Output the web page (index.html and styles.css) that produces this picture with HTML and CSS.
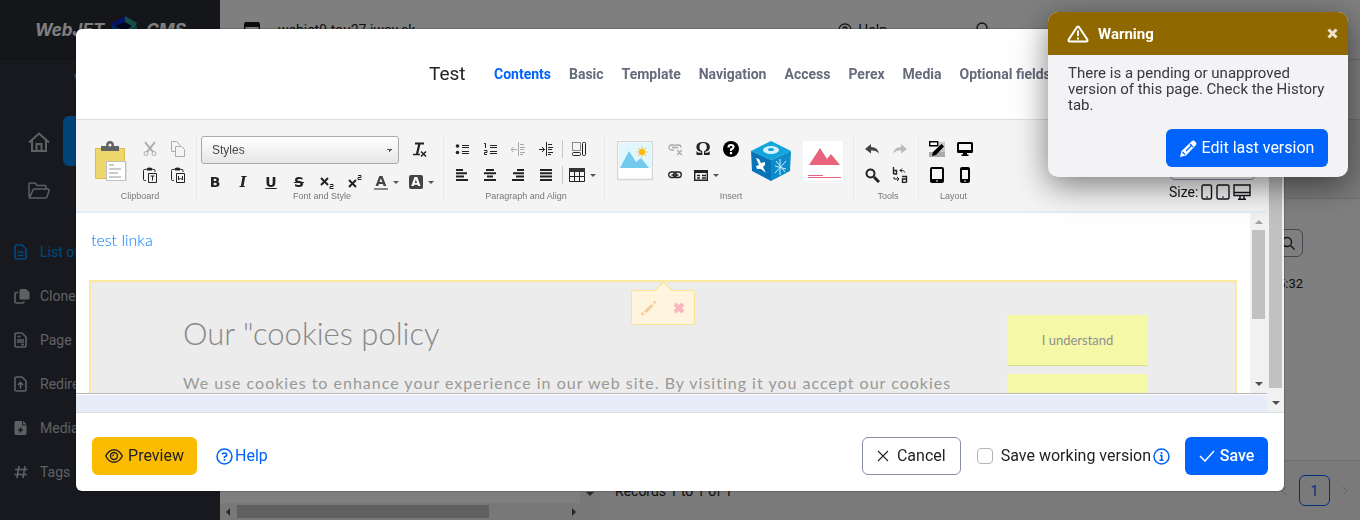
FILE: index.html
```html
<!DOCTYPE html>
<html lang="en">
<head>
<meta charset="utf-8">
<title>WebJET CMS</title>
<link rel="stylesheet" href="styles.css">
</head>
<body>
<div class="app">
  <aside class="sidebar">
    <div class="logo">
      <span>WebJET</span>
      <svg width="26" height="28" viewBox="0 0 26 28"><path d="M13 0 0 7v13l13 8z" fill="#0a28c8"/><path d="m13 0 12 7-4 8-8-4z" fill="#2ca08a"/><path d="m0 9 13 6v13L0 21z" fill="#0b5bb5"/><path d="m13 14 12-4v10l-12 8z" fill="#1c8c86"/><path d="m3 10 10-4 7 4-7 5z" fill="#02103c"/></svg>
      <span>CMS</span>
    </div>
    <div class="site-name">WebJET</div>
    <div class="rail">
      <div class="rail-icons">
        <svg width="22" height="20" viewBox="0 0 22 20" class="line"><path d="M1 10.500 11 1.500l10 9M4 8v11h14V8M8.500 19v-7h5v7" stroke-width="2"/></svg>
        <svg width="22" height="17" viewBox="0 0 22 17" class="line"><path d="M1 15V2q0-1 1-1h5l2 2.500h8q1 0 1 1V7M1.500 16 5 8q.5-1 1.500-1H20q1.500 0 1 1.500L19 15q-.4 1-1.500 1z" stroke-width="1.500"/></svg>
      </div>
      <div class="rail-active"></div>
    </div>
    <nav class="menu">
      <a href="#" class="active"><svg width="13" height="16" viewBox="0 0 13 16" class="line"><path d="M1 2.500Q1 1 2.500 1H8l4 4v8.500q0 1.500-1.500 1.500h-8Q1 15 1 13.500zM3.500 8h6M3.500 11.500h6" stroke-width="1.700"/></svg>List of web pages</a>
      <a href="#"><svg width="16" height="16" viewBox="0 0 16 16"><path d="M7 1h5l3.500 3v6q0 1.500-1.500 1.500H7Q5.500 11.500 5.500 10V2.500Q5.500 1 7 1z" fill="currentColor"/><path d="M4 4.500H2.500Q1 4.500 1 6v7.500Q1 15 2.500 15h6q1.500 0 1.500-1.500" fill="none" stroke="currentColor" stroke-width="1.600"/></svg>Clone structure</a>
      <a href="#"><svg width="13" height="16" viewBox="0 0 13 16" class="line"><path d="M1 2.500Q1 1 2.500 1H8l4 4v8.500q0 1.500-1.500 1.500h-8Q1 15 1 13.500zM3.500 4.500h3M3 8h7M3 10h7M7 12.500h3" stroke-width="1.600"/></svg>Page attributes</a>
      <a href="#"><svg width="13" height="16" viewBox="0 0 13 16" class="line"><path d="M1 2.500Q1 1 2.500 1H8l4 4v8.500q0 1.500-1.500 1.500h-8Q1 15 1 13.500zM6.500 12.500V7M4 9l2.500-2.500L9 9" stroke-width="1.600"/></svg>Redirects</a>
      <a href="#"><svg width="13" height="16" viewBox="0 0 13 16"><path d="M.5 2.500Q.5 1 2 1h6v4.500h4.500v8q0 1.500-1.500 1.500H2Q.5 15 .5 13.500zM9 .8 12.700 4.500H9z" fill="currentColor"/><path d="M6.500 7.500v5M4 10h5" stroke="#30333c" stroke-width="1.500"/></svg>Media</a>
      <a href="#"><svg width="14" height="14" viewBox="0 0 14 14" class="line"><path d="M5 1 3 13M11 1 9 13M1 4.500h12.500M.5 9.500H13" stroke-width="1.600"/></svg>Tags</a>
    </nav>
  </aside>
  <main class="content">
    <header class="topbar">
      <svg width="16" height="16" viewBox="0 0 16 16"><rect x=".75" y=".75" width="14.500" height="14.500" rx="1.500" fill="none" stroke="#15171f" stroke-width="1.500"/><path d="M1 1h14v4H1z" fill="#15171f"/></svg>
      <span class="domain">webjet9.tau27.iway.sk</span>
      <a href="#" class="top-help"><svg width="14" height="14" viewBox="0 0 16 16" class="line"><circle cx="8" cy="8" r="7" stroke-width="1.400"/><path d="M5.800 6.200Q6 4.500 8 4.500t2.200 1.700Q10 7.500 8 8.500v1M8 11v1.500" stroke-width="1.600"/></svg>Help</a>
      <svg width="15" height="15" viewBox="0 0 15 15" class="line top-search"><circle cx="7" cy="6" r="5" stroke-width="1.300"/><path d="m10 10 4 4" stroke-width="1.300"/></svg>
    </header>
    <div class="subbar"></div>
    <div class="filterbar"></div>
    <div class="panels">
      <section class="tree">
        <div class="vbar"><i class="arrow down"></i></div>
        <div class="hbar"><i class="arrow left"></i><b></b><i class="arrow right"></i></div>
      </section>
      <section class="list">
        <div class="list-body">
          <button class="search-btn" aria-label="Search"><svg width="14" height="14" viewBox="0 0 14 14" class="line"><circle cx="6" cy="6" r="4.500" stroke-width="1.300"/><path d="m9.500 9.500 4 4" stroke-width="1.300"/></svg></button>
          <span class="time">5:32</span>
        </div>
        <footer class="list-footer">
          <span>Records 1 to 1 of 1</span>
          <div class="pager"><svg width="6" height="10" viewBox="0 0 6 10" class="line"><path d="M5 1 1 5l4 4"/></svg><button>1</button><svg width="6" height="10" viewBox="0 0 6 10" class="line"><path d="m1 1 4 4-4 4"/></svg></div>
        </footer>
      </section>
    </div>
  </main>
</div>

<div class="backdrop">
  <div class="modal" role="dialog" aria-label="Test">
    <header class="modal-header">
      <h1>Test</h1>
      <nav class="tabs">
        <a href="#" class="active">Contents</a><a href="#">Basic</a><a href="#">Template</a><a href="#">Navigation</a><a href="#">Access</a><a href="#">Perex</a><a href="#">Media</a><a href="#">Optional fields</a>
      </nav>
    </header>
    <div class="modal-body">
      <div class="editor">
        <div class="toolbar">
          <div class="group clipboard">
            <div class="tools">
              <button class="big" aria-label="Paste"><svg width="34" height="42" viewBox="0 0 34 42"><path d="M27 22h6v19H13z" fill="#dcdcdc"/><path d="M1.500 8.500h29v30h-29z" fill="#eed76d" stroke="#d8bd4c"/><path d="M7 6h5q0-5 4-5t4 5h5v5H7z" fill="#636363"/><circle cx="16" cy="5" r="1.500" fill="#f4f4f4"/><path d="M12.500 21.500h19v19h-19z" fill="#fff" stroke="#c0c0c0"/><path d="M15 25h5M15 29h12M15 33h9M15 37h12" stroke="#bbb" stroke-width="1.500"/></svg></button>
              <div class="rows">
                <div class="row"><button aria-label="Cut" class="off"><svg width="14" height="16" viewBox="0 0 14 16" class="line"><path d="m2 1 8 10M12 1 4 11" stroke-width="2"/><circle cx="3" cy="12.500" r="2"/><circle cx="11" cy="12.500" r="2"/></svg></button><button aria-label="Copy" class="off"><svg width="14" height="16" viewBox="0 0 14 16" class="line"><path d="M4.500 10.500h-4V.500h5l4 4M4.500 5.500h6l3 3v7h-9z"/></svg></button></div>
                <div class="row"><button aria-label="Paste as plain text"><svg width="14" height="16" viewBox="0 0 14 16" class="line"><path d="M3 13.500H1.500q-1 0-1-1v-9q0-1 1-1H3M10 2.500h1q1 0 1 1V5M3.500 2h6" /><path d="M4 2q0-1 2.500-1T9 2v1H4z" fill="#222"/><path d="M5.500 6.500h8v9h-8zM7.500 9h4M9.500 9v4.500"/></svg></button><button aria-label="Paste from Word"><svg width="14" height="16" viewBox="0 0 14 16" class="line"><path d="M3 13.500H1.500q-1 0-1-1v-9q0-1 1-1H3M10 2.500h1q1 0 1 1V5M3.500 2h6"/><path d="M4 2q0-1 2.500-1T9 2v1H4z" fill="#222"/><path d="M5.500 6.500h8v9h-8zM7.500 9v4l2-2 2 2V9"/></svg></button></div>
              </div>
            </div>
            <span class="caption">Clipboard</span>
          </div>
          <div class="group font">
            <div class="tools stack">
              <div class="row"><select class="styles" aria-label="Styles"><option>Styles</option></select><button class="wide" aria-label="Remove format"><svg width="16" height="16" viewBox="0 0 16 16" class="line"><path d="M3 1.500h9M7.500 1.500 5 12" stroke-width="2.200"/><path d="M1 12.500h7M9 9.500l5 5M14 9.500l-5 5" stroke-width="1.500"/></svg></button></div>
              <div class="row text-row"><button><b>B</b></button><button><i class="serif">I</i></button><button><u>U</u></button><button><s>S</s></button><button aria-label="Subscript"><svg width="16" height="16" viewBox="0 0 16 16" class="line"><path d="m2 4 7 7M9 4l-7 7" stroke-width="2"/><path d="M11 10.500h3v2h-3v2h3.500"/></svg></button><button aria-label="Superscript"><svg width="16" height="16" viewBox="0 0 16 16" class="line"><path d="m2 6 7 7M9 6l-7 7" stroke-width="2"/><path d="M11 1.500h3v2h-3v2h3.500"/></svg></button><button class="drop"><b class="color">A</b><i class="caret"></i></button><button class="drop"><b class="fill">A</b><i class="caret"></i></button></div>
            </div>
            <span class="caption">Font and Style</span>
          </div>
          <div class="group para">
            <div class="tools">
              <div class="rows">
                <div class="row">
                  <button aria-label="Bullets"><svg width="14" height="14" viewBox="0 0 14 14" class="line"><circle cx="2.500" cy="4" r="1.800" fill="#222" stroke="none"/><circle cx="2.500" cy="10.500" r="1.800" fill="#222" stroke="none"/><path d="M7 3.500h7M7 5.500h7M7 9.500h7M7 11.500h7"/></svg></button>
                  <button aria-label="Numbering"><svg width="14" height="14" viewBox="0 0 14 14" class="line"><path d="M1 1.500h1.500V6M1 8.500h3v2H1.500v2H4M7 3.500h7M7 5.500h7M7 9.500h7M7 11.500h7"/></svg></button>
                  <button aria-label="Outdent" class="off"><svg width="14" height="14" viewBox="0 0 14 14" class="line"><path d="M0 7.500h6M2.500 5 0 7.500 2.500 10M7.500 0v14M9 2.500h4M9 5.500h5M9 7.500h4M9 10.500h5M9 12.500h3"/></svg></button>
                  <button aria-label="Indent"><svg width="14" height="14" viewBox="0 0 14 14" class="line"><path d="M0 7.500h6M3 5l2.500 2.500L3 10M7.500 0v14M9 2.500h4M9 5.500h5M9 7.500h4M9 10.500h5M9 12.500h3"/></svg></button>
                  <i class="sep"></i>
                  <button aria-label="Page layout"><svg width="14" height="14" viewBox="0 0 14 14" class="line"><path d="M.5.500h8v8h-8z" stroke-dasharray="1 1"/><rect x="10.500" y=".5" width="3" height="13" rx="1"/><rect x=".5" y="10.500" width="8" height="3" rx="1"/></svg></button>
                </div>
                <div class="row">
                  <button aria-label="Align left"><svg width="12" height="12" viewBox="0 0 12 12" class="line thick"><path d="M0 1h7M0 4.300h11M0 7.600h8M0 11h12"/></svg></button>
                  <button aria-label="Center"><svg width="12" height="12" viewBox="0 0 12 12" class="line thick"><path d="M2 1h8M0 4.300h12M3 7.600h6M0 11h12"/></svg></button>
                  <button aria-label="Align right"><svg width="12" height="12" viewBox="0 0 12 12" class="line thick"><path d="M5 1h7M1 4.300h11M4 7.600h8M0 11h12"/></svg></button>
                  <button aria-label="Justify"><svg width="12" height="12" viewBox="0 0 12 12" class="line thick"><path d="M0 1h12M0 4.300h12M0 7.600h12M0 11h12"/></svg></button>
                  <i class="sep"></i>
                  <button class="drop" aria-label="Table"><svg width="16" height="14" viewBox="0 0 16 14" class="line"><path d="M.5.500h15v13H.5zM.5 8.500h15M5.500 4v9.500M10.500 4v9.500"/><path d="M0 0h16v4H0z" fill="#333" stroke="none"/></svg><i class="caret"></i></button>
                </div>
              </div>
            </div>
            <span class="caption">Paragraph and Align</span>
          </div>
          <div class="group insert">
            <div class="tools">
              <button class="big" aria-label="Image"><svg width="36" height="40" viewBox="0 0 36 40"><path d="M.5.500h35v38H.5z" fill="#fff" stroke="#d5d5d5" stroke-width="1.500"/><path d="M2 2h32v25H2z" fill="#e0f7ff"/><path d="m3 27 9-17 7 11 5-4 8 10z" fill="#74caec"/><circle cx="25" cy="11" r="3.200" fill="#fdb913"/><path d="M25 5.500v2M25 14.500v2M19.500 11h2M28.500 11h2M21 7l1.500 1.500M27.500 13.500 29 15M29 7l-1.500 1.500M22.500 13.500 21 15" stroke="#fdb913"/></svg></button>
              <div class="rows">
                <div class="row"><button aria-label="Unlink" class="off"><svg width="15" height="13" viewBox="0 0 15 13" class="line"><path d="M6 7H3.500Q1 7 1 4.500T3.500 2H6M8 2h2.500Q13 2 13 4.500M4 4.500h6M5 2.500Q7 1.500 8 3M9 7l5 5M14 7l-5 5" stroke-width="1.300"/></svg></button><button aria-label="Special character"><span class="omega">Ω</span></button><button aria-label="About"><svg width="16" height="16" viewBox="0 0 16 16"><circle cx="8" cy="8" r="8"/><path d="M5.500 6.500q0-2.500 2.500-2.500t2.500 2Q10.500 7.500 8 8.500V10M8 11v2.200" fill="none" stroke="#fff" stroke-width="2.200"/></svg></button></div>
                <div class="row"><button aria-label="Link"><svg width="14" height="8" viewBox="0 0 14 8" class="line"><rect x=".7" y="1" width="7.600" height="5.500" rx="2.700" stroke-width="1.300"/><rect x="5.700" y="1" width="7.600" height="5.500" rx="2.700" stroke-width="1.300"/><path d="M3.500 4h7" stroke-width="1.300"/></svg></button><button class="drop" aria-label="Form"><svg width="14" height="11" viewBox="0 0 14 11" class="line"><path d="M.7.700h12.600v9.600H.7z" stroke-width="1.400"/><path d="M0 0h14v3H0z" fill="#222" stroke="none"/><path d="M3 5.500h3M8 5.500h4M3 8h3M8 8h4" stroke-width="1.400"/></svg><i class="caret"></i></button></div>
              </div>
              <button class="big" aria-label="Application"><svg width="40" height="40" viewBox="0 0 40 40"><path d="M20 0 0 10l20 9 20-9z" fill="#12a4dc"/><path d="m0 10 20 9v21L1 30z" fill="#0873b8"/><path d="m40 10-20 9v21l19-10z" fill="#0c8ccb"/><ellipse cx="20" cy="9" rx="8" ry="4" fill="#d8f2fc"/><ellipse cx="20" cy="8.500" rx="3" ry="1.500" fill="#12a4dc"/><path d="m5 17 3 1 2 4 4-1 0 3-2 2 3 6-5-4-4 0-1-3 3-1z" fill="#fff"/><path d="m24 32 11-12M24 25l11 3M29 18v16M25 20l9 11" stroke="#c8eefb"/></svg></button>
              <button class="big" aria-label="Block"><svg width="40" height="40" viewBox="0 0 40 40"><path d="M0 0h40v40H0z" fill="#fff"/><path d="M6 24 17 7l7 11 4-5 9 11z" fill="#e9637a"/><path d="M5 34.500h15M5 36.500h33" stroke="#e9637a"/></svg></button>
            </div>
            <span class="caption">Insert</span>
          </div>
          <div class="group small">
            <div class="tools"><div class="rows">
              <div class="row"><button aria-label="Undo"><svg width="14" height="12" viewBox="0 0 14 12"><path d="M6 1v3q7 0 8 7-2-4-8-3.500v3L0 6z" fill="#444"/></svg></button><button aria-label="Redo"><svg width="14" height="12" viewBox="0 0 14 12"><path d="M8 1v3Q1 4 0 11q2-4 8-3.500v3L14 6z" fill="#bbb"/></svg></button></div>
              <div class="row"><button aria-label="Find"><svg width="15" height="15" viewBox="0 0 15 15" class="line"><circle cx="5.500" cy="5.500" r="4" stroke-width="2"/><path d="m9 9 5 5" stroke-width="3"/></svg></button><button aria-label="Replace"><svg width="16" height="16" viewBox="0 0 16 16" class="line"><path d="M1.500 0v7M1.500 3.500h3v3.500h-3M10 9.500h4.500v6M14.500 12h-4v3.500h4" stroke-width="1.400"/><path d="M8 3.500q4-1 5 2M8 3.500l2-2M8 3.500l2 2M2 10v2h5M5 10l2 2-2 2"/></svg></button></div>
            </div></div>
            <span class="caption">Tools</span>
          </div>
          <div class="group small last">
            <div class="tools"><div class="rows">
              <div class="row"><button aria-label="Edit blocks"><svg width="16" height="16" viewBox="0 0 16 16"><path d="M10 1h6v15H0v-5h8z" fill="#c9c9c9"/><path d="M0 11h16v5H0z" fill="#aaa"/><path d="M.7.700h8v4h-8z" fill="#fff" stroke="#000" stroke-width="1.400"/><path d="m3 15 1-4 8.500-8L15 5.500 7 14z" fill="#000"/></svg></button><button aria-label="Desktop"><svg width="16" height="14" viewBox="0 0 16 14"><path d="M1.500 0h13Q16 0 16 1.500v8q0 1.500-1.500 1.500H10v1.500h1.500V14h-7v-1.500H6V11H1.500Q0 11 0 9.500v-8Q0 0 1.500 0z"/><path d="M2 2h12v6H2z" fill="#f4f4f4"/></svg></button></div>
              <div class="row"><button aria-label="Tablet"><svg width="14" height="16" viewBox="0 0 14 16"><rect width="14" height="16" rx="2"/><path d="M2 2h10v10H2z" fill="#f4f4f4"/><path d="M6 14h2" stroke="#fff"/></svg></button><button aria-label="Phone"><svg width="10" height="16" viewBox="0 0 10 16"><rect width="10" height="16" rx="2"/><path d="M2 3h6v9H2z" fill="#f4f4f4"/><path d="M4 14h2" stroke="#fff"/></svg></button></div>
            </div></div>
            <span class="caption">Layout</span>
          </div>
          <div class="view">
            <select aria-label="View"></select>
            <div class="size">Size:
              <svg width="12" height="16" viewBox="0 0 12 16" class="line"><rect x="1" y="1" width="9.500" height="14" rx="1.500" stroke-width="1.400"/><path d="M5 13h2"/></svg>
              <svg width="14" height="16" viewBox="0 0 14 16" class="line"><rect x="1" y="1" width="12" height="14" rx="1.500" stroke-width="1.400"/><path d="M6 13h2"/></svg>
              <svg width="18" height="16" viewBox="0 0 18 16" class="line"><path d="M1 1h16v10.500H1zM1 8.500h16M7 12v3M11 12v3M5 15.300h8" stroke-width="1.400"/></svg>
            </div>
          </div>
        </div>
        <div class="page-view">
          <div class="page">
            <p><a href="#">test linka</a></p>
            <section class="cookies">
              <div class="cookie-text">
                <h2>Our "cookies policy</h2>
                <p>We use cookies to enhance your experience in our web site. By visiting it you accept our cookies</p>
              </div>
              <div class="cookie-actions"><button>I understand</button><button aria-label="More"></button></div>
              <div class="bubble">
                <svg width="16" height="16" viewBox="0 0 16 16"><path d="M0 15.500 1 11.500l3 3zM3 11 10.500 4 12.500 6 5.500 13zM12 2.500 13.500.5 15.500 2.500 13.500 4z" fill="#f7cba0"/></svg>
                <svg width="12" height="12" viewBox="0 0 12 12"><path d="m2 2 8 8M10 2l-8 8" stroke="#fbb6bd" stroke-width="4"/></svg>
              </div>
            </section>
          </div>
          <div class="scroll"><i class="arrow up"></i><b></b><i class="arrow down"></i></div>
        </div>
        <div class="status"></div>
      </div>
      <div class="scroll outer"><b></b><i class="arrow down"></i></div>
    </div>
    <footer class="modal-footer">
      <button class="btn preview"><svg width="18" height="14" viewBox="0 0 18 14" class="line"><path d="M.7 7Q4 .7 9 .7T17.300 7Q14 13.300 9 13.300T.7 7z" stroke-width="1.400"/><circle cx="9" cy="7" r="3.500" stroke-width="1.400"/><path d="M9 5Q9 7 7 7" /></svg>Preview</button>
      <a href="#" class="help"><svg width="17" height="17" viewBox="0 0 17 17" class="line"><circle cx="8.500" cy="8.500" r="7.500" stroke-width="1.500"/><path d="M6.200 6.500Q6.500 5 8.500 5t2.200 1.700Q10.700 8 8.500 9v1M8.500 11v1.700" stroke-width="1.700"/></svg>Help</a>
      <button class="btn cancel"><svg width="12" height="12" viewBox="0 0 12 12" class="line"><path d="m1 1 10 10M11 1 1 11" stroke-width="1.100"/></svg>Cancel</button>
      <label class="working"><input type="checkbox">Save working version</label>
      <svg width="17" height="17" viewBox="0 0 17 17" class="line info"><circle cx="8.500" cy="8.500" r="7.500" stroke-width="1.500"/><path d="M8.500 4v2M7 7.500h1.700v4.300M6.500 12.200h4" stroke-width="1.600"/></svg>
      <button class="btn save"><svg width="16" height="12" viewBox="0 0 16 12" class="line"><path d="m1 6 5 5 9-10" stroke-width="1.500"/></svg>Save</button>
    </footer>
  </div>
</div>

<div class="toast" role="alert">
  <header><svg width="22" height="18" viewBox="0 0 22 18" class="line"><path d="M11 1.500q.8 0 1.300 1l8 12q.7 2-1 2H2.700q-1.700 0-1-2l8-12q.5-1 1.300-1z" stroke-width="2"/><path d="M11 5.500V11M11 12.500v2" stroke-width="2"/></svg><strong>Warning</strong><button aria-label="Close"><svg width="11" height="11" viewBox="0 0 11 11" class="line"><path d="m1.500 1.500 8 8M9.500 1.500l-8 8" stroke-width="3"/></svg></button></header>
  <div class="toast-body">
    <p>There is a pending or unapproved version of this page. Check the History tab.</p>
    <button class="btn edit"><svg width="17" height="17" viewBox="0 0 17 17"><path d="M0 17 1.500 11 11.500 1.500Q13-.3 15 1.500q2.500 2 .5 4L6 15.500z" fill="#fff"/><path d="m2.500 12 2.500 2.500M10 4l3 3M6 11l6-6" stroke="#0063fb" stroke-width="1.200"/></svg>Edit last version</button>
  </div>
</div>
</body>
</html>
```
FILE: styles.css
```css
* { box-sizing: border-box; }
body { margin: 0; height: 100vh; overflow: hidden; font: 14px/20px Roboto, "Open Sans", sans-serif; color: #222; background: #fff; }
button, select, input { font: inherit; color: inherit; margin: 0; }
button { cursor: pointer; }
a { color: inherit; text-decoration: none; }
h1, h2, p { margin: 0; font-weight: 400; }
svg { flex: none; display: block; }
.line { fill: none; stroke: currentColor; }
.thick { stroke-width: 2; }

/* application behind the dialog */
.app { display: flex; height: 100vh; }
.sidebar { flex: none; width: 220px; background: #30333c; color: #bfc1c9; overflow: hidden; }
.logo { display: flex; align-items: center; gap: 8px; height: 60px; padding-left: 35px; background: #2a2c35; border-bottom: 1px solid #24262d; color: #fff; font: italic bold 17px/20px Inter, sans-serif; }
.site-name { padding: 8px 0 0 74px; height: 56px; line-height: 24px; font-size: 15px; }
.rail { display: flex; height: 114px; }
.rail-icons { display: flex; flex-direction: column; gap: 30px; width: 63px; padding: 16px 0 0 28px; }
.rail-active { flex: 1; height: 50px; border-radius: 6px 0 0 6px; background: #0088f0; }
.menu a { display: flex; align-items: center; height: 44px; padding-left: 14px; font-size: 14px; white-space: nowrap; }
.menu svg { margin-right: 13px; }
.menu svg[width="16"] { margin-right: 10px; }
.menu svg[width="14"] { margin-right: 12px; }
.menu .active { color: #0090f8; }
.content { flex: 1; display: flex; flex-direction: column; min-width: 0; }
.topbar { display: flex; align-items: center; height: 60px; padding: 0 24px; border-bottom: 1px solid #dcdce0; }
.domain { margin-left: 18px; }
.top-help { display: flex; align-items: center; gap: 6px; margin-left: auto; margin-right: 88px; }
.top-search { margin-right: 346px; }
.subbar { height: 60px; border-bottom: 1px solid #dcdce0; }
.filterbar { height: 79px; background: #f4f4f4; border-bottom: 1px solid #dcdce0; }
.panels { flex: 1; display: flex; }
.tree { width: 380px; display: flex; flex-direction: column; background: #fff; }
.vbar { flex: 1; width: 20px; align-self: flex-end; display: flex; flex-direction: column; justify-content: flex-end; align-items: center; padding-bottom: 7px; background: #f1f1f1; }
.hbar { display: flex; align-items: center; height: 17px; padding: 0 24px 0 6px; background: #f1f1f1; }
.hbar b { width: 252px; height: 13px; margin-left: 7px; background: #c1c1c1; }
.hbar .right { margin-left: auto; }
.list { flex: 1; display: flex; flex-direction: column; }
.list-body { flex: 1; display: flex; flex-direction: column; align-items: flex-end; padding: 30px 57px 0 0; gap: 17px; background: #fff; }
.search-btn { display: flex; align-items: center; justify-content: center; width: 30px; height: 28px; border: 1px solid #868ea8; border-radius: 6px; background: none; padding: 0; }
.time { font-size: 13px; }
.list-footer { display: flex; align-items: center; justify-content: space-between; height: 60px; padding: 0 12px 0 15px; background: #f4f4f4; border-top: 1px solid #dcdce0; }
.pager { display: flex; align-items: center; gap: 12px; color: #c5c7d0; }
.pager button { width: 31px; height: 31px; border: 1px solid #0063fb; border-radius: 6px; background: none; color: #0063fb; padding: 0; }

/* scrollbars */
.arrow { width: 0; height: 0; border: 4px solid transparent; }
.arrow.down { border-top-color: #505050; border-bottom: 0; }
.arrow.up { border-bottom-color: #a3a3a3; border-top: 0; }
.arrow.left { border-right-color: #505050; border-left: 0; }
.arrow.right { border-left-color: #505050; border-right: 0; }
.scroll { flex: none; display: flex; flex-direction: column; align-items: center; width: 17px; padding: 7px 0; background: #f1f1f1; }
.scroll b { width: 13px; height: 89px; margin-top: 6px; background: #c1c1c1; }
.scroll .down { margin-top: auto; }
.scroll.outer { padding-top: 0; }
.scroll.outer b { flex: 1; margin: 0 0 13px; }

/* dialog */
.backdrop { position: fixed; inset: 0; display: flex; padding: 29px 76px; background: rgba(0, 0, 0, .5); }
.modal { flex: 1; min-width: 0; display: flex; flex-direction: column; background: #fff; border-radius: 6px; overflow: hidden; box-shadow: 0 0 2px rgba(0, 0, 0, .5); }
.modal-header { display: flex; align-items: center; height: 91px; padding-left: 353px; border-bottom: 1px solid #dedee0; }
.modal-header h1 { width: 65px; font-size: 19px; line-height: 24px; }
.tabs { display: flex; gap: 18px; font-size: 14px; font-weight: 700; color: #666b7c; white-space: nowrap; }
.tabs .active { color: #0063fb; }
.modal-body { flex: 1; min-height: 0; display: flex; border-bottom: 1px solid #d9dfe6; }
.editor { flex: 1; min-width: 0; display: flex; flex-direction: column; }
.toolbar { display: flex; height: 93px; padding-top: 16px; background: #f4f4f4; border-bottom: 2px solid #e1edfa; }
.group { flex: none; display: flex; flex-direction: column; height: 66px; border-right: 1px solid #e9e9e9; }
.group.last { border-right: 0; }
.tools { display: flex; height: 54px; }
.caption { padding-left: 4px; font: 9px/12px "Liberation Sans", sans-serif; color: #777; text-align: center; }
.group button { display: flex; align-items: center; justify-content: center; width: 28px; height: 26px; padding: 0; border: 0; background: none; color: #222; }
.group button.off { color: #aaa; }
.group button.big { width: auto; height: 50px; }
.group button.drop { width: 35px; gap: 5px; }
.row { display: flex; align-items: center; }
.caret { border: 3px solid transparent; border-top-color: #555; border-bottom: 0; }
.clipboard { width: 121px; }
.clipboard .tools { padding-left: 18px; gap: 8px; }
.clipboard .caption { padding-left: 8px; }
.font { width: 247px; }
.stack { flex-direction: column; padding-left: 4px; }
.stack .row { height: 27px; }
.group .wide { width: 41px; }
.styles { width: 198px; height: 28px; padding: 0 10px; border: 1px solid #aaa; border-radius: 3px; font: 12px/16px "Liberation Sans", sans-serif; color: #474747; appearance: none; background: linear-gradient(45deg, transparent 50%, #555 50%) 185px 12px / 3px 3px no-repeat, linear-gradient(-45deg, transparent 50%, #555 50%) 188px 12px / 3px 3px no-repeat, linear-gradient(#fff, #e6e6e6); }
.styles { background: linear-gradient(to top right, transparent 50%, #555 50%) 185px 12px / 3px 3px no-repeat, linear-gradient(to top left, transparent 50%, #555 50%) 188px 12px / 3px 3px no-repeat, linear-gradient(#fff, #e6e6e6); }
.text-row { padding-top: 11px; }
.text-row button { font: 14px/16px "DejaVu Sans", sans-serif; font-weight: 700; }
.serif { font-family: "DejaVu Serif", serif; }
.color { border-bottom: 2px solid #888; line-height: 13px; padding: 0 2px; color: #444; }
.fill { width: 14px; height: 14px; line-height: 14px; font-size: 12px; text-align: center; border-radius: 2px; background: #444; color: #fff; }
.para { width: 161px; }
.para .tools { padding-left: 4px; }
.sep { width: 1px; height: 18px; margin: 0 2px; background: #c8c8c8; }
.insert { width: 249px; }
.insert .tools { padding-left: 12px; }
.insert .rows { width: 90px; margin: 0 0 0 8px; }
.insert .big + .big { margin-left: 12px; }
.omega { font: 700 19px/20px "Liberation Serif", serif; }
.small { width: 65px; }
.small .tools { padding-left: 4px; }
.view { display: flex; flex-direction: column; gap: 4px; margin: 0 11px 0 auto; width: 87px; font-size: 14px; }
.view select { width: 87px; height: 28px; margin-top: 16px; border: 1px solid #868ea8; border-radius: 6px; background: #fff; }
.size { display: flex; align-items: center; gap: 3px; line-height: 16px; color: #13151b; }
.page-view { flex: 1; min-height: 0; display: flex; border-bottom: 1px solid #b6b6b6; }
.page { flex: 1; min-width: 0; overflow: hidden; padding: 16px 13px 0; }
.page > p { padding-left: 2px; line-height: 22px; font-family: Lato, sans-serif; font-size: 16px; font-weight: 300; color: #007bff; }
.cookies { position: relative; display: flex; justify-content: space-between; margin-top: 29px; min-height: 200px; padding: 33px 87px 0 92px; background: #ececec; border: 2px solid #fbe9a0; color: #888; }
.cookie-text { font-family: Lato, sans-serif; white-space: nowrap; }
.cookie-text h2 { font-size: 31px; line-height: 36px; font-weight: 300; }
.cookie-text p { margin-top: 20px; font-size: 16px; line-height: 24px; letter-spacing: 1px; color: #999; }
.cookie-actions { display: flex; flex-direction: column; gap: 8px; width: 141px; }
.cookie-actions button { height: 51px; border: 0; border-bottom: 1px solid #d8dc98; background: #f4f8a7; font: 13px/16px Lato, sans-serif; color: #909090; }
.bubble { position: absolute; top: 8px; left: calc(50% - 32px); display: flex; align-items: center; justify-content: center; gap: 16px; width: 64px; height: 35px; border: 1px solid #fbe493; border-radius: 2px; background: #fff5de; }
.bubble::before { content: ""; position: absolute; top: -7px; left: 25px; width: 12px; height: 12px; transform: rotate(45deg); background: linear-gradient(135deg, #fff5de 50%, transparent 50%); border: 1px solid #fbe493; border-right: 0; border-bottom: 0; }
.status { height: 17px; margin-top: 1px; background: #e6edf8; }

.modal-footer { display: flex; align-items: center; height: 78px; padding: 8px 16px 0; font-size: 16px; }
.btn { display: flex; align-items: center; justify-content: center; gap: 5px; height: 38px; padding: 0; border: 0; border-radius: 6px; font-size: 16px; }
.preview { width: 105px; background: #fbbc00; }
.help { display: flex; align-items: center; gap: 2px; margin-left: 19px; color: #0063fb; }
.cancel { width: 99px; gap: 8px; margin-left: auto; border: 1px solid #868ea8; background: #fff; }
.working { display: flex; align-items: center; gap: 8px; margin-left: 16px; }
.working input { width: 16px; height: 16px; appearance: none; border: 1px solid #b5b5b9; border-radius: 4px; background: #fff; }
.info { margin: 0 15px 0 2px; color: #0063fb; }
.save { width: 83px; background: #0063fb; color: #fff; font-weight: 500; }

/* notification */
.toast { position: fixed; top: 12px; right: 12px; width: 300px; border-radius: 10px; overflow: hidden; background: #f3f3f6; box-shadow: 0 8px 32px rgba(0, 0, 0, .5); }
.toast header { display: flex; align-items: center; height: 43px; padding: 0 10px 0 19px; background: #8f6900; color: #fff; }
.toast strong { margin-left: 9px; font-size: 15px; }
.toast header button { margin-left: auto; padding: 0; border: 0; background: none; color: #ece4d0; }
.toast-body { display: flex; flex-direction: column; align-items: flex-end; gap: 16px; padding: 10px 20px; color: #37383c; }
.toast p { align-self: stretch; font-size: 15px; line-height: 16px; }
.edit { width: 162px; background: #0063fb; color: #fff; }
```
